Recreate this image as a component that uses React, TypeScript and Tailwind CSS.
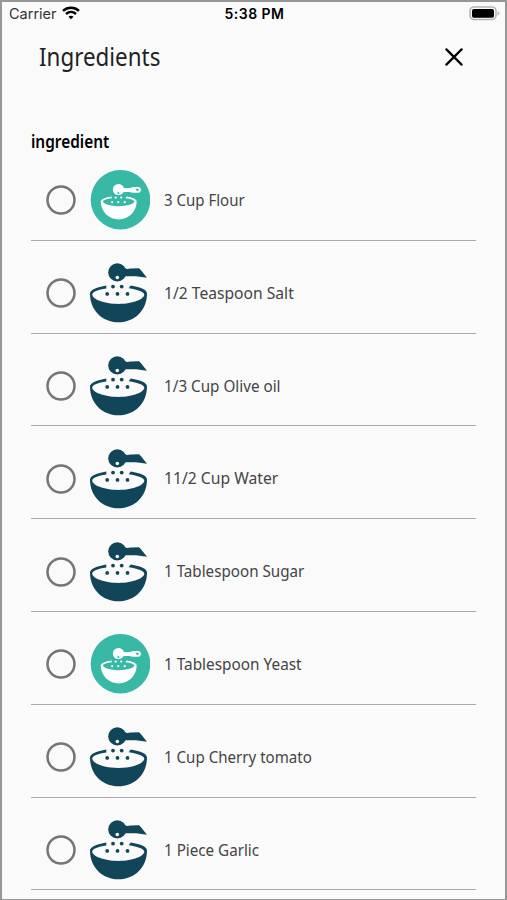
const ingredients = [
  { label: "3 Cup Flour", round: true, fit: "scale-x-[0.91]" },
  { label: "1/2 Teaspoon Salt", round: false, fit: "scale-x-[0.948]" },
  { label: "1/3 Cup Olive oil", round: false, fit: "scale-x-[0.923]" },
  { label: "11/2 Cup Water", round: false, fit: "scale-x-[0.951]" },
  { label: "1 Tablespoon Sugar", round: false, fit: "scale-x-[0.92]" },
  { label: "1 Tablespoon Yeast", round: true, fit: "scale-x-[0.93]" },
  { label: "1 Cup Cherry tomato", round: false, fit: "scale-x-[0.915]" },
  { label: "1 Piece Garlic", round: false, fit: "scale-x-[0.92]" },
];

function RoundBowl() {
  return (
    <svg width="60" height="60" viewBox="0 0 60 60" className="shrink-0">
      <circle cx="30.5" cy="29.8" r="29.8" fill="#38b9a6" />
      <circle cx="28.5" cy="19.5" r="5.6" fill="#fff" />
      <path d="M32 18.2L40 17.9L43 16.9H48A2.9 2.9 0 0 1 48 22.7H43L39 21.9H32Z" fill="#fff" />
      <circle cx="47.4" cy="19.7" r="1.3" fill="#38b9a6" />
      <circle cx="28.4" cy="22.9" r="1" fill="#38b9a6" />
      <path
        d="M21.5 26.6C15 27.5 10.7 29.3 10.7 31.8C11 41.5 18.5 49.4 28.7 49.4C39 49.4 46.4 41.5 46.7 31.8C46.7 29.3 42.5 27.5 36.5 26.6L35.5 28.2C41 28.8 44.3 30 44.3 31.5C44.3 34 37.3 36.2 28.7 36.2S13.1 34 13.1 31.5C13.1 30 16.5 28.8 22 28.2Z"
        fill="#fff"
      />
      <g fill="#fff">
        <circle cx="25.7" cy="27.6" r="1.1" />
        <circle cx="31.2" cy="27.6" r="1.1" />
        <circle cx="22.2" cy="32.2" r="1.1" />
        <circle cx="28.3" cy="32.2" r="1.1" />
        <circle cx="34.7" cy="32.2" r="1.1" />
      </g>
    </svg>
  );
}

function DarkBowl() {
  return (
    <svg width="60" height="60" viewBox="0 0 60 60" className="shrink-0">
      <g fill="#114559">
        <circle cx="27.3" cy="9.4" r="9.1" />
        <path d="M35 5.2L37 5.9L41 5.4L49 5.2L51 7.2L57 14.7L46 13.3L35 13.2Z" />
        <path d="M16.3 22.4C7 24 0 26.6 0 30.5C0 47 12 59.3 28.5 59.3S57 47 57 30.5C57 26.6 51 24 40.7 22.4L38.7 25.2C48 26.6 54.3 28.8 54.3 31.6C54.3 36 43.5 41 28.5 41S2.2 36 2.2 31.6C2.2 28.8 8 26.6 16.3 25.4Z" />
        <circle cx="23" cy="23.6" r="1.9" />
        <circle cx="31.7" cy="23.6" r="1.9" />
        <circle cx="17.2" cy="30.9" r="1.9" />
        <circle cx="27.5" cy="30.9" r="1.9" />
        <circle cx="37.5" cy="30.9" r="1.9" />
      </g>
      <circle cx="27.3" cy="14.5" r="1.8" fill="#fafafa" />
    </svg>
  );
}

export default function App() {
  return (
    <div className="h-[900px] w-[507px] overflow-hidden border-2 border-b border-[#969696] bg-[#fafafa] font-['Noto_Sans',sans-serif]">
      <div className="flex h-[23px] items-center justify-between pl-[7px] pr-[5px] font-['Inter',sans-serif] text-black">
        <div className="flex w-[180px] items-center gap-[6px]">
          <span className="w-[47px] whitespace-nowrap text-[14.5px] text-[#333]">Carrier</span>
          <svg width="18" height="14" viewBox="0 0 18 14" className="-translate-y-[1px]" fill="none" stroke="#000" strokeWidth="2.5">
            <path d="M1 4.8C5.5 .7 12.5 .7 17 4.8" />
            <path d="M4 8C7 5.3 11 5.3 14 8" />
            <path d="M6.5 10.7C8 9.5 10 9.5 11.5 10.7L9 13.2Z" fill="#000" stroke="none" />
          </svg>
        </div>
        <span className="text-[14px] font-semibold tracking-[0.45px]">5:38 PM</span>
        <div className="flex w-[180px] justify-end">
          <svg width="31" height="15" viewBox="0 0 31 15">
            <rect x="1" y="1" width="26" height="12.5" rx="4" fill="#fafafa" stroke="#b5b5b5" strokeWidth="1.6" />
            <rect x="3" y="3" width="22" height="8.7" rx="1.8" fill="#000" />
            <path d="M28.6 5V9.5Q30.5 8.7 30.5 7.2T28.6 5Z" fill="#b5b5b5" />
          </svg>
        </div>
      </div>

      <header className="flex h-[63px] items-center justify-between pl-[37px] pr-[42px] text-[#222]">
        <h1 className="origin-left scale-x-[0.895] text-[25px]">Ingredients</h1>
        <svg width="18" height="18" viewBox="0 0 18 18" stroke="#000" strokeWidth="2.2" strokeLinecap="round">
          <path d="M1.4 1.4L16.6 16.6M16.6 1.4L1.4 16.6" />
        </svg>
      </header>

      <main className="mx-[29px]">
        <div className="h-[60px] pt-[40px] text-black">
          <h2 className="w-max origin-left scale-x-[0.855] text-[18px] font-semibold">ingredient</h2>
        </div>
        {ingredients.map((item) => (
          <div key={item.label} className="flex h-[92.8px] items-center border-b border-[#a9a9a9] pl-[15px] pt-[13px]">
            <svg width="30" height="30" viewBox="0 0 30 30" className="shrink-0">
              <circle cx="15" cy="15" r="13.5" fill="none" stroke="#757575" strokeWidth="2.5" />
            </svg>
            <div className="ml-[14px] mr-[14px]">{item.round ? <RoundBowl /> : <DarkBowl />}</div>
            <span className={"origin-left whitespace-nowrap text-[16.5px] text-[#444] " + item.fit}>{item.label}</span>
          </div>
        ))}
      </main>
    </div>
  );
}
